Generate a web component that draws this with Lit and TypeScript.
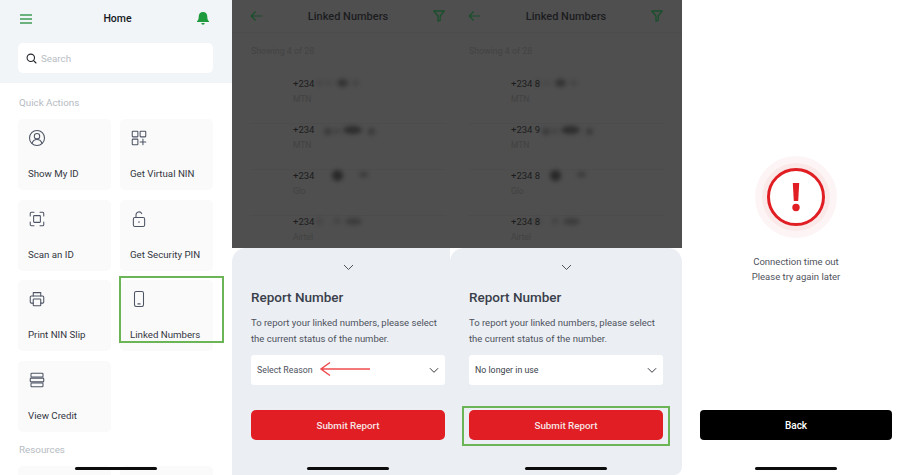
import { LitElement, html, css, svg } from "lit";
import { customElement } from "lit/decorators.js";

const ic = (body: unknown, size = 18, color = "#4d5464", sw = 1.4) => html`<svg width=${size} height=${size} viewBox="0 0 24 24" fill="none" stroke=${color} stroke-width=${sw} stroke-linecap="round" stroke-linejoin="round">${body}</svg>`;

const icons = {
  id: svg`<circle cx="12" cy="12" r="10"/><circle cx="12" cy="9.5" r="3.6"/><path d="M5.5 19c1-3.4 3.5-5 6.5-5s5.500 1.600 6.500 5"/>`,
  grid: svg`<rect x="3" y="3" width="7.500" height="7.500" rx=".8"/><rect x="13.500" y="3" width="7.500" height="7.500" rx=".8"/><rect x="3" y="13.500" width="7.500" height="7.500" rx=".8"/><path d="M17.250 13.500v7.500M13.500 17.250h7.500"/>`,
  scan: svg`<path d="M3 8V4.500C3 3.700 3.700 3 4.500 3H8M16 3h3.500c.8 0 1.500.7 1.500 1.500V8M21 16v3.500c0 .8-.7 1.500-1.500 1.500H16M8 21H4.500C3.700 21 3 20.300 3 19.500V16"/><rect x="7.500" y="7.500" width="9" height="9" rx=".8"/>`,
  lock: svg`<rect x="4.500" y="10" width="15" height="12" rx="2"/><path d="M8 10V6.500a4 4 0 0 1 7.600-1.700"/><path d="M12 15.500v1"/>`,
  print: svg`<path d="M7 8V3.500h10V8"/><path d="M7 17.500H4.500A1.500 1.500 0 0 1 3 16v-6.500A1.500 1.500 0 0 1 4.500 8h15A1.500 1.500 0 0 1 21 9.500V16a1.500 1.500 0 0 1-1.500 1.500H17"/><rect x="7" y="12" width="10" height="9" rx=".8"/>`,
  phone: svg`<rect x="6" y="2" width="12" height="20" rx="2.200"/><path d="M10.500 18.500h3"/>`,
  stack: svg`<rect x="4" y="3" width="16" height="5" rx="1"/><rect x="3" y="9.500" width="18" height="5" rx="1"/><rect x="4" y="16" width="16" height="5" rx="1"/>`,
};

const cards: [keyof typeof icons, string][] = [
  ["id", "Show My ID"],
  ["grid", "Get Virtual NIN"],
  ["scan", "Scan an ID"],
  ["lock", "Get Security PIN"],
  ["print", "Print NIN Slip"],
  ["phone", "Linked Numbers"],
  ["stack", "View Credit"],
];

type Blob = [number, number, number, number, number];
const rows: { net: string; digit: string; blobs: Blob[] }[] = [
  { net: "MTN", digit: "8", blobs: [[84, -3, 7, 6, .2], [94, -3, 6, 6, .15], [105, -4, 11, 8, .65], [120, -3, 7, 6, .25]] },
  { net: "MTN", digit: "9", blobs: [[92, -1, 8, 7, .5], [102, -1, 6, 6, .3], [111, -3, 19, 8, .8], [136, -1, 7, 7, .5]] },
  { net: "Glo", digit: "8", blobs: [[100, -5, 11, 11, .9], [127, -3, 9, 5, .5]] },
  { net: "Airtel", digit: "8", blobs: [[84, -3, 7, 7, .2], [102, -3, 6, 6, .3], [113, -3, 17, 7, .45]] },
];

@customElement("app-root")
export class AppRoot extends LitElement {
  static styles = css`
    :host { display: block; width: 911px; height: 475px; overflow: hidden; background: #fff; font-family: "Roboto", "Liberation Sans", sans-serif; }
    .page { display: flex; width: 911px; height: 475px; }
    .screen { position: relative; flex: none; height: 475px; overflow: hidden; }
    .home { width: 232px; background: #fff; }
    .dim-a { width: 218px; }
    .dim-b { width: 232px; border-radius: 0 0 8px 0; }
    .done { width: 228px; background: #fff; display: flex; flex-direction: column; align-items: center; }

    .top { height: 83px; box-sizing: border-box; background: #f1f5f7; padding: 0 19px 0 18px; }
    .bar { height: 37px; display: flex; align-items: center; justify-content: space-between; padding: 0 4px 0 2px; }
    .bar h1 { margin: 0 0 0 6px; font-size: 10.500px; font-weight: 500; color: #16181d; }
    .search { margin-top: 6px; height: 30px; background: #fff; border-radius: 5px; display: flex; align-items: center; gap: 4px; padding-left: 8px; font-size: 9.800px; color: #b9bdc4; }
    .body { padding: 0 19px 0 18px; }
    .label { font-size: 9.800px; color: #b6bbc2; line-height: 12px; padding-left: 1px; }
    .label.qa { padding-top: 14px; }
    .grid { display: grid; grid-template-columns: 93px 93px; column-gap: 9px; row-gap: 9.500px; margin-top: 10px; }
    .card { height: 71px; box-sizing: border-box; background: #fafafa; border-radius: 5px; padding: 10px 10px 11px; display: flex; flex-direction: column; justify-content: space-between; font-size: 9.700px; color: #33373f; white-space: nowrap; }
    .card svg { display: block; }
    .label.res { margin-top: 12px; }
    .stub { margin-top: 10px; display: grid; grid-template-columns: 93px 93px; column-gap: 9px; }
    .stub div { height: 40px; background: #fafafa; border-radius: 5px; }
    .mark { position: absolute; box-sizing: border-box; border: 2px solid #6cb557; pointer-events: none; }
    .mark.card-mark { left: 119px; top: 276px; width: 105px; height: 67px; }
    .mark.btn-mark { left: 12px; top: 406px; width: 208px; height: 40px; }
    .pill { position: absolute; bottom: 5px; left: 50%; width: 82px; height: 3px; margin-left: -41px; border-radius: 2px; background: #0c0c0c; }
    .dim-a .pill, .dim-b .pill { left: 116px; }

    .dark { height: 248px; background: #4f4f4f; box-sizing: border-box; }
    .dhead { height: 33px; box-sizing: border-box; display: flex; align-items: center; justify-content: space-between; padding: 0 19px 0 18px; border-bottom: 1px solid #4c4c4c; width: 232px; }
    .dhead h2 { margin: 0; font-size: 11px; font-weight: 500; color: #1c1d1f; }
    .show { padding: 13px 0 0 19px; font-size: 8.800px; color: #434343; line-height: 11px; }
    .rows { margin: 0 18px; width: 196px; padding-top: 21px; }
    .row { position: relative; height: 46px; box-sizing: border-box; padding: 0 0 0 43px; border-bottom: 1px solid #4c4c4c; }
    .num { display: block; font-size: 9.500px; line-height: 12px; color: #1c1c1c; white-space: nowrap; }
    .net { display: block; margin-top: 4px; font-size: 8.500px; line-height: 10px; color: #424242; }
    .blob { position: absolute; border-radius: 50%; background: #262626; filter: blur(2px); }

    .sheet { position: absolute; left: 0; top: 248px; width: 232px; height: 227px; box-sizing: border-box; background: #ebeef3; border-radius: 14px 14px 0 0; padding: 0 19px; }
    .chev { display: flex; justify-content: center; padding-top: 16px; height: 10px; }
    .sheet h3 { margin: 14px 0 0; font-size: 13.500px; line-height: 18px; font-weight: 500; color: #3a3f4b; }
    .sheet p { margin: 9px 0 0; font-size: 9.500px; line-height: 15.500px; color: #4d525d; }
    .select { margin-top: 9px; height: 30px; background: #fff; border-radius: 3px; display: flex; align-items: center; justify-content: space-between; padding: 0 6px; font-size: 8.800px; color: #4d525d; }
    .select.on { color: #3a3f4b; }
    .submit { margin-top: 25px; height: 30px; background: #e01e23; border-radius: 5px; display: flex; align-items: center; justify-content: center; color: #f6e4e4; font-size: 9.800px; font-weight: 500; }
    .arrow { position: absolute; left: 87px; top: 113px; }

    .err { margin-top: 156px; width: 82px; height: 82px; border-radius: 50%; background: #fdf5f5; display: flex; align-items: center; justify-content: center; }
    .msg { margin: 16px 0 0; text-align: center; font-size: 9.500px; line-height: 15px; color: #4f535c; }
    .back { margin-top: auto; margin-bottom: 35px; width: 192px; height: 30px; border-radius: 4px; background: #000; color: #fff; font-size: 10px; font-weight: 500; display: flex; align-items: center; justify-content: center; }
  `;

  private chev(w = 11, c = "#4d525d") {
    return html`<svg width=${w} height="7" viewBox="0 0 11 7" fill="none" stroke=${c} stroke-width="1"><path d="M1 1l4.500 4.500L10 1"/></svg>`;
  }

  private sheet(value: string, on: boolean, withArrow: boolean) {
    return html`<div class="sheet">
      <div class="chev">${this.chev()}</div>
      <h3>Report Number</h3>
      <p>To report your linked numbers, please select the current status of the number.</p>
      <div class="select ${on ? "on" : ""}"><span>${value}</span>${this.chev(10, "#23262c")}</div>
      <div class="submit">Submit Report</div>
      ${withArrow ? html`<svg class="arrow" width="52" height="16" viewBox="0 0 52 16" fill="none" stroke="#ee4c4f" stroke-width="1.500"><path d="M2 8h49M11 1.500 2 8l9 6.500"/></svg>` : ""}
    </div>`;
  }

  private list(withDigit: boolean) {
    return html`<div class="dark">
      <div class="dhead">
        <svg width="13" height="12" viewBox="0 0 14 12" fill="none" stroke="#1a4f2c" stroke-width="1.300"><path d="M13 6H1.500M6 1.200 1.300 6 6 10.800"/></svg>
        <h2>Linked Numbers</h2>
        <svg width="12" height="12" viewBox="0 0 12 12" fill="none" stroke="#1a4f2c" stroke-width="1.300" stroke-linejoin="round"><path d="M.8 1h10.400L7.200 6v4.500L5 11.200V6z"/></svg>
      </div>
      <div class="show">Showing 4 of 28</div>
      <div class="rows">
        ${rows.map((r) => html`<div class="row">
          <span class="num">+234${withDigit ? ` ${r.digit}` : ""}</span><span class="net">${r.net}</span>
          ${r.blobs.map((b) => html`<i class="blob" style="left:${b[0] - 18}px;top:${b[1] + 5}px;width:${b[2]}px;height:${b[3]}px;opacity:${b[4]}"></i>`)}
        </div>`)}
      </div>
    </div>`;
  }

  render() {
    return html`<div class="page">
      <section class="screen home">
        <div class="top">
          <div class="bar">
            <svg width="12" height="10" viewBox="0 0 12 10" stroke="#3f9c58" stroke-width="1.300"><path d="M0 1h12M0 5h12M0 9h12"/></svg>
            <h1>Home</h1>
            <svg width="12" height="13" viewBox="0 0 12 13" fill="#1f9a3c"><path d="M6 0c2.700 0 4.300 2 4.300 4.700 0 2.300.5 3.400 1.700 4.600v.7H0v-.7c1.200-1.200 1.700-2.300 1.700-4.600C1.700 2 3.300 0 6 0z"/><path d="M4.300 11h3.400a1.700 1.700 0 0 1-3.400 0z"/></svg>
          </div>
          <div class="search">
            <svg width="11" height="11" viewBox="0 0 11 11" fill="none" stroke="#23262c" stroke-width="1.100" stroke-linecap="round"><circle cx="4.800" cy="4.800" r="3.700"/><path d="M7.600 7.600 10 10"/></svg>
            <span>Search</span>
          </div>
        </div>
        <div class="body">
          <div class="label qa">Quick Actions</div>
          <div class="grid">
            ${cards.map(([k, t]) => html`<div class="card">${ic(icons[k], 18)}<span>${t}</span></div>`)}
          </div>
          <div class="label res">Resources</div>
          <div class="stub"><div></div><div></div></div>
        </div>
        <div class="mark card-mark"></div>
        <div class="pill"></div>
      </section>

      <section class="screen dim-a">
        ${this.list(false)}
        ${this.sheet("Select Reason", false, true)}
        <div class="pill"></div>
      </section>

      <section class="screen dim-b">
        ${this.list(true)}
        ${this.sheet("No longer in use", true, false)}
        <div class="mark btn-mark"></div>
        <div class="pill"></div>
      </section>

      <section class="screen done">
        <div class="err">
          <svg width="68" height="68" viewBox="0 0 68 68">
            <circle cx="34" cy="34" r="34" fill="#fbe9ea"/>
            <circle cx="34" cy="34" r="27.500" fill="#fff" stroke="#e01e23" stroke-width="3"/>
            <path d="M30.800 20h6.400l-1 18h-4.400z" fill="#e01e23"/>
            <circle cx="34" cy="44.500" r="3.700" fill="#e01e23"/>
          </svg>
        </div>
        <p class="msg">Connection time out<br />Please try again later</p>
        <div class="back">Back</div>
        <div class="pill"></div>
      </section>
    </div>`;
  }
}
